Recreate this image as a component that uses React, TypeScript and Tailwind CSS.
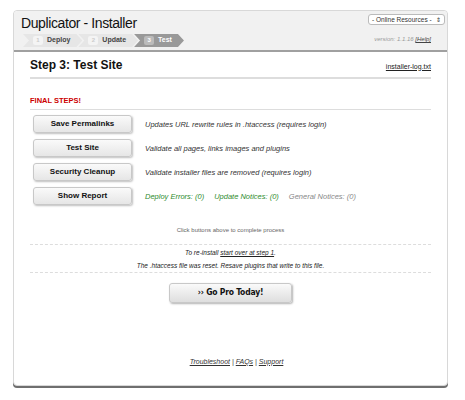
import React from "react";

const font = { fontFamily: '"Liberation Sans", Arial, sans-serif' };

const steps = [
  { n: "1", label: "Deploy", active: false },
  { n: "2", label: "Update", active: false },
  { n: "3", label: "Test", active: true },
];

const actions = [
  { label: "Save Permalinks", desc: "Updates URL rewrite rules in .htaccess (requires login)" },
  { label: "Test Site", desc: "Validate all pages, links images and plugins" },
  { label: "Security Cleanup", desc: "Validate installer files are removed (requires login)" },
];

function Step({ n, label, active }: { n: string; label: string; active: boolean }) {
  return (
    <div
      className={
        "flex items-center gap-[4px] h-[13px] pl-[10px] pr-[12px] -ml-[4px] text-[7px] font-bold " +
        (active ? "bg-[#999] text-white" : "bg-[#e6e6e6] text-[#444]")
      }
      style={{ clipPath: "polygon(0 0, calc(100% - 6px) 0, 100% 50%, calc(100% - 6px) 100%, 0 100%, 6px 50%)" }}
    >
      <span
        className={
          "flex items-center justify-center w-[10px] h-[9px] rounded-[2px] text-[6px] " +
          (active ? "bg-[#bbb] text-white" : "bg-[#f4f4f4] text-[#ccc]")
        }
      >
        {n}
      </span>
      <span>{label}</span>
    </div>
  );
}

function Btn({ children }: { children: React.ReactNode }) {
  return (
    <button className="w-[99px] h-[18px] shrink-0 rounded-[3px] border border-[#c8c8c8] bg-gradient-to-b from-[#fafafa] to-[#e6e6e6] shadow-[1px_1px_2px_rgba(0,0,0,0.25)] text-[8px] font-bold text-[#111]">
      {children}
    </button>
  );
}

export default function App() {
  return (
    <div className="w-[465px] h-[400px] bg-white pt-[10px] pl-[13px]" style={font}>
      <div className="w-[435px] h-[376px] flex flex-col rounded-[4px] border border-[#d8d8d8] bg-white shadow-[0_2px_0_#6f6f6f]">
        {/* Header */}
        <div className="h-[41px] bg-[#f1f1f1] rounded-t-[4px] border-b-[2px] border-[#a0a0a0] flex justify-between pl-[7px] pr-[2px]">
          <div className="flex flex-col">
            <div className="text-[14px] leading-[18px] mt-[3px] tracking-[-0.4px] text-[#111]">Duplicator - Installer</div>
            <div className="flex mt-[2px] ml-[6px]">
              {steps.map((s) => (
                <Step key={s.n} {...s} />
              ))}
            </div>
          </div>
          <div className="flex flex-col items-end">
            <div className="mt-[3px] h-[11px] w-[77px] flex items-center justify-between rounded-[3px] border border-[#bbb] bg-white px-[3px] text-[6.5px] text-[#333]">
              <span>- Online Resources -</span>
              <span className="text-[6px] leading-none">⇕</span>
            </div>
            <div className="mt-[10px] mr-[14px] text-[6px] italic text-[#999]">
              version: 1.1.16 <span className="underline text-[#444]">[Help]</span>
            </div>
          </div>
        </div>

        {/* Body */}
        <div className="px-[16px] flex flex-col flex-1">
          <div className="mt-[4px] flex items-end justify-between border-b-[2px] border-[#ddd] pb-[3px]">
            <span className="text-[12px] font-bold text-[#111]">Step 3: Test Site</span>
            <span className="text-[7px] underline text-[#222] mb-[2px]">installer-log.txt</span>
          </div>

          <div className="mt-[16px] text-[7.5px] font-bold text-[#c00] border-b border-[#ddd] pb-[3px]">FINAL STEPS!</div>

          <div className="mt-[5px] flex flex-col gap-[6px] pl-[3px]">
            {actions.map((a) => (
              <div key={a.label} className="flex items-center gap-[13px]">
                <Btn>{a.label}</Btn>
                <span className="text-[7.5px] italic text-[#333]">{a.desc}</span>
              </div>
            ))}
            <div className="flex items-center gap-[13px]">
              <Btn>Show Report</Btn>
              <span className="text-[7.5px] italic flex gap-[10px]">
                <span className="text-[#2e8b2e]">Deploy Errors: (0)</span>
                <span className="text-[#2e8b2e]">Update Notices: (0)</span>
                <span className="text-[#888]">General Notices: (0)</span>
              </span>
            </div>
          </div>

          <div className="mt-[21px] text-center text-[6px] text-[#666]">Click buttons above to complete process</div>

          <div className="mt-[9px] border-t border-dashed border-[#ddd] pt-[3px] pb-[1px] border-b flex flex-col items-center gap-[3px] text-[6.5px] italic text-[#222]">
            <div>
              To re-install <span className="underline">start over at step 1</span>.
            </div>
            <div>The .htaccess file was reset. Resave plugins that write to this file.</div>
          </div>

          <div className="mt-[10px] flex justify-center">
            <button
              className="w-[123px] h-[20px] rounded-[3px] border border-[#c8c8c8] bg-gradient-to-b from-[#fafafa] to-[#dedede] shadow-[1px_1px_2px_rgba(0,0,0,0.3)] text-[8.5px] font-bold text-[#111] tracking-[-0.2px]"
              style={{ fontFamily: '"Liberation Sans Narrow", "DejaVu Sans Condensed", sans-serif' }}
            >
              ›› Go Pro Today!
            </button>
          </div>

          <div className="mt-auto mb-[18px] pl-[12px] text-center text-[7px] italic text-[#333]">
            <span className="underline">Troubleshoot</span> | <span className="underline">FAQs</span> |{" "}
            <span className="underline">Support</span>
          </div>
        </div>
      </div>
    </div>
  );
}
